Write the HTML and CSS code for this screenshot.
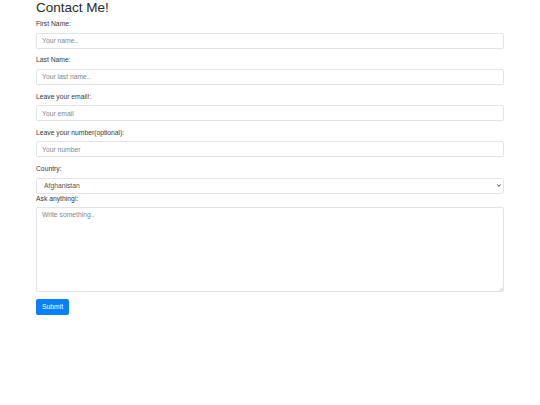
FILE: index.html
```html
<!DOCTYPE html>
<html lang="en">
<head>
<meta charset="utf-8">
<title>Contact Me!</title>
<link rel="stylesheet" href="styles.css">
</head>
<body>
<div class="container">
  <h1 class="title">Contact Me!</h1>
  <form class="contact-form">
    <div class="form-group">
      <label class="field-label" for="fname">First Name:</label>
      <input class="form-control" type="text" id="fname" placeholder="Your name..">
    </div>
    <div class="form-group">
      <label class="field-label" for="lname">Last Name:</label>
      <input class="form-control" type="text" id="lname" placeholder="Your last name..">
    </div>
    <div class="form-group">
      <label class="field-label" for="email">Leave your email!:</label>
      <input class="form-control" type="email" id="email" placeholder="Your email">
    </div>
    <div class="form-group">
      <label class="field-label" for="number">Leave your number(optional):</label>
      <input class="form-control" type="text" id="number" placeholder="Your number">
    </div>
    <label class="field-label" for="country">Country:</label>
    <div class="select-wrap">
      <select class="form-control select-control" id="country">
        <option>Afghanistan</option>
        <option>Albania</option>
        <option>Algeria</option>
      </select>
      <svg class="select-arrow" viewBox="0 0 4 3" aria-hidden="true">
        <path d="M0.3 0.4 L2 2.4 L3.7 0.4" fill="none" stroke="#333" stroke-width="0.9"/>
      </svg>
    </div>
    <div class="form-group">
      <label class="field-label" for="msg">Ask anything!:</label>
      <div class="area-wrap">
        <textarea class="form-control text-area" id="msg" placeholder="Write something.."></textarea>
        <svg class="resize-grip" viewBox="0 0 4 4" aria-hidden="true">
          <path d="M0.5 3.8 L3.8 0.5 M2.2 3.8 L3.8 2.2" fill="none" stroke="#9a9a9a" stroke-width="0.5"/>
        </svg>
      </div>
    </div>
    <button class="btn-submit" type="submit">Submit</button>
  </form>
</div>
</body>
</html>
```
FILE: styles.css
```css
html, body {
  margin: 0;
  padding: 0;
  background: #ffffff;
}

body {
  font-family: "Liberation Sans", Arial, sans-serif;
  color: #34383c;
  font-size: 6.75px;
  line-height: 10.125px;
}

.container {
  max-width: 468px;
  margin-left: 36px;
}

.title {
  font-size: 13.5px;
  line-height: 16.2px;
  font-weight: 400;
  margin: 0 0 3px 0;
  color: #26292d;
}

.contact-form {
  margin: 0;
}

.form-group {
  margin-bottom: 6.75px;
}

.field-label {
  display: block;
  font-size: 6.75px;
  line-height: 10.125px;
  margin-bottom: 3.375px;
}

.form-control {
  display: block;
  box-sizing: border-box;
  width: 100%;
  height: 16px;
  margin: 0;
  padding: 0 5px;
  font-family: "Liberation Sans", Arial, sans-serif;
  font-size: 6.75px;
  line-height: 10px;
  color: #4e555c;
  background: #ffffff;
  border: 1px solid #e1e4e7;
  border-radius: 1.7px;
  outline: none;
}

.form-control::placeholder {
  color: #80878e;
  opacity: 1;
}

.select-wrap {
  position: relative;
}

.select-control {
  -webkit-appearance: none;
  appearance: none;
  padding: 0 7px;
}

.select-arrow {
  position: absolute;
  right: 3px;
  top: 6.5px;
  width: 4px;
  height: 3px;
  pointer-events: none;
}

.area-wrap {
  position: relative;
}

.text-area {
  height: 85px;
  padding: 1.6px 5px;
  resize: none;
}

.resize-grip {
  position: absolute;
  right: 1px;
  bottom: 1px;
  width: 4px;
  height: 4px;
  pointer-events: none;
}

.btn-submit {
  display: inline-block;
  box-sizing: border-box;
  height: 16px;
  padding: 0 5px;
  margin: 0;
  font-family: "Liberation Sans", Arial, sans-serif;
  font-size: 6.75px;
  line-height: 10px;
  color: #ffffff;
  background: #0a7ffb;
  border: 1px solid #0a7ffb;
  border-radius: 1.7px;
  cursor: pointer;
}
```
